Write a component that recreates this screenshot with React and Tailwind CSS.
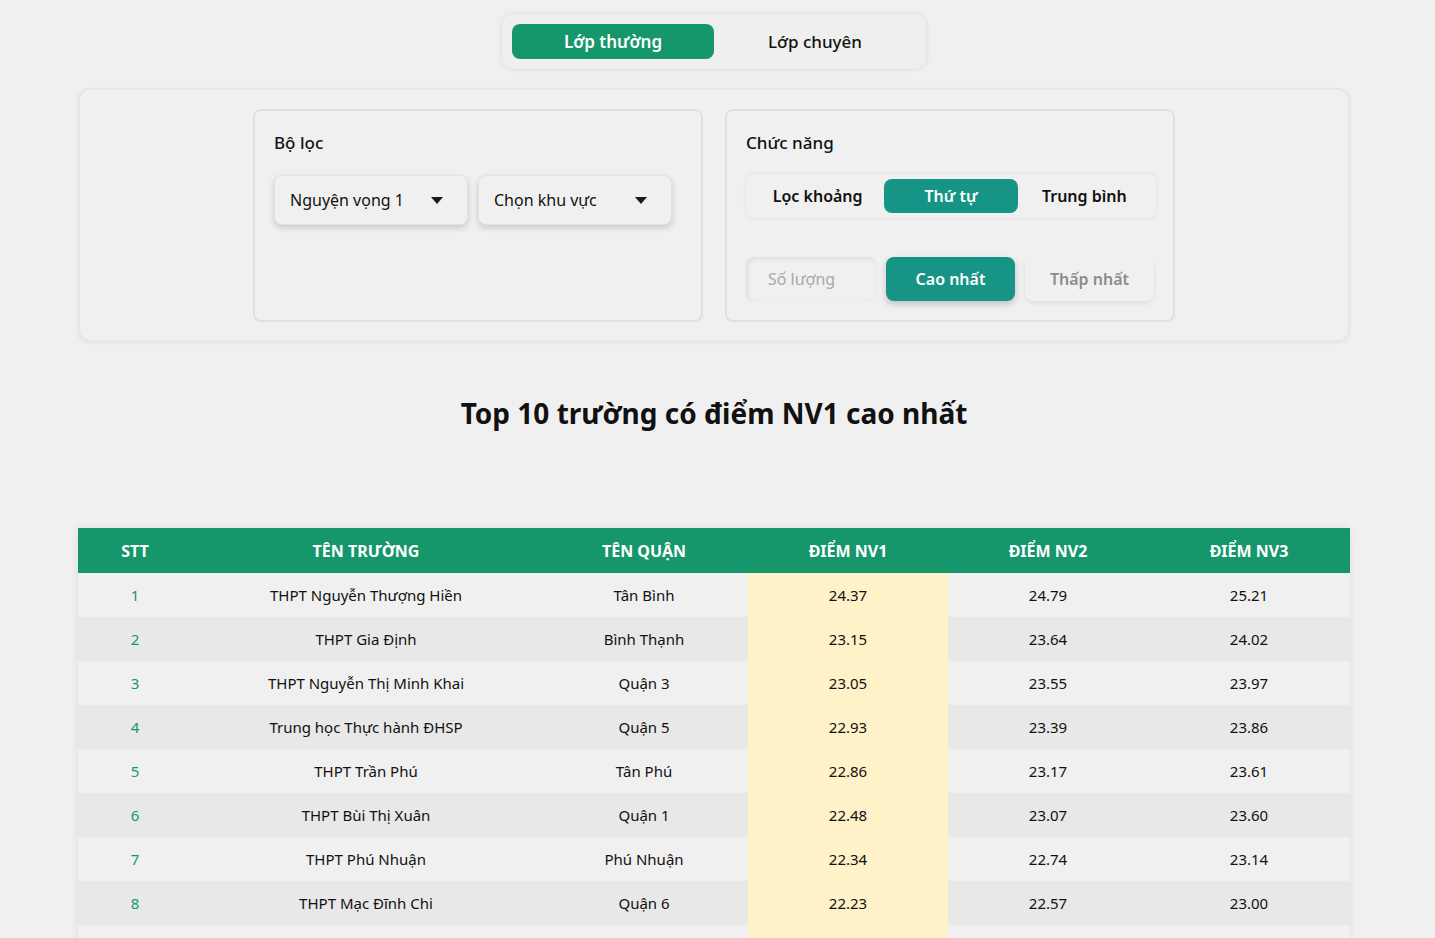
import React, { useState } from "react";

const schools = [
  { name: "THPT Nguyễn Thượng Hiền", district: "Tân Bình", nv1: 24.37, nv2: 24.79, nv3: 25.21 },
  { name: "THPT Gia Định", district: "Bình Thạnh", nv1: 23.15, nv2: 23.64, nv3: 24.02 },
  { name: "THPT Nguyễn Thị Minh Khai", district: "Quận 3", nv1: 23.05, nv2: 23.55, nv3: 23.97 },
  { name: "Trung học Thực hành ĐHSP", district: "Quận 5", nv1: 22.93, nv2: 23.39, nv3: 23.86 },
  { name: "THPT Trần Phú", district: "Tân Phú", nv1: 22.86, nv2: 23.17, nv3: 23.61 },
  { name: "THPT Bùi Thị Xuân", district: "Quận 1", nv1: 22.48, nv2: 23.07, nv3: 23.6 },
  { name: "THPT Phú Nhuận", district: "Phú Nhuận", nv1: 22.34, nv2: 22.74, nv3: 23.14 },
  { name: "THPT Mạc Đĩnh Chi", district: "Quận 6", nv1: 22.23, nv2: 22.57, nv3: 23.0 },
  { name: "THPT Nguyễn Hữu Huân", district: "Thủ Đức", nv1: 22.1, nv2: 22.45, nv3: 22.9 },
  { name: "THPT Lê Quý Đôn", district: "Quận 3", nv1: 21.95, nv2: 22.4, nv3: 22.85 },
];

const format = num => Number(num).toFixed(2);

function Caret() {
  return (
    <svg width="12" height="7" viewBox="0 0 12 7" className="shrink-0">
      <path d="M0 0 L12 0 L6 7 Z" fill="#1a1a1a" />
    </svg>
  );
}

function Dropdown({ label }) {
  return (
    <div className="w-[194px] h-[50px] rounded-lg border border-[#e2e2e2] bg-[#f0f0f0] shadow-[0_3px_6px_rgba(0,0,0,0.16)] flex items-center justify-between pl-[15px] pr-[24px] text-[16px] text-[#111]">
      <span>{label}</span>
      <Caret />
    </div>
  );
}

export default function App() {
  const [classType, setClassType] = useState("thuong");
  const [mode, setMode] = useState("thutu");
  const [order, setOrder] = useState("cao");

  return (
    <div className="min-h-screen bg-[#f0f0f0] font-['Noto_Sans',sans-serif] text-[#111] pb-10 pr-[7px]">
      {/* Class type tabs */}
      <div className="flex justify-center pt-[14px]">
        <div className="w-[424px] h-[55px] p-[10px] rounded-xl bg-[#efefef] shadow-[0_0_6px_rgba(0,0,0,0.09)] flex">
          <button
            onClick={() => setClassType("thuong")}
            className={`flex-1 rounded-lg text-[17px] font-semibold ${classType === "thuong" ? "bg-[#16976b] text-white" : "text-[#111]"}`}
          >
            Lớp thường
          </button>
          <button
            onClick={() => setClassType("chuyen")}
            className={`flex-1 rounded-lg text-[17px] font-medium ${classType === "chuyen" ? "bg-[#16976b] text-white" : "text-[#111]"}`}
          >
            Lớp chuyên
          </button>
        </div>
      </div>

      {/* Filter & functions */}
      <div className="mx-[78px] mt-[19px] rounded-xl border-2 border-[#e6e6e6] shadow-[0_1px_4px_rgba(0,0,0,0.06)] pt-[19px] pb-[18px] flex justify-center gap-[22px]">
        <div className="w-[450px] h-[213px] rounded-lg border-2 border-[#e0e0e0] px-[19px] pt-[20px]">
          <div className="text-[17px] font-medium leading-[24px]">Bộ lọc</div>
          <div className="flex gap-[10px] mt-[20px]">
            <Dropdown label="Nguyện vọng 1" />
            <Dropdown label="Chọn khu vực" />
          </div>
        </div>

        <div className="w-[450px] h-[213px] rounded-lg border-2 border-[#e0e0e0] px-[19px] pt-[20px]">
          <div className="text-[17px] font-medium leading-[24px]">Chức năng</div>
          <div className="mt-[19px] w-[410px] h-[44px] p-[5px] rounded-lg bg-[#f0f0f0] shadow-[0_0_5px_rgba(0,0,0,0.08)] flex">
            {[
              ["loc", "Lọc khoảng"],
              ["thutu", "Thứ tự"],
              ["tb", "Trung bình"],
            ].map(([key, label]) => (
              <button
                key={key}
                onClick={() => setMode(key)}
                className={`flex-1 rounded-lg text-[16px] font-semibold ${mode === key ? "bg-[#169486] text-white" : "text-[#111]"}`}
              >
                {label}
              </button>
            ))}
          </div>
          <div className="mt-[39px] flex gap-[10px]">
            <input
              placeholder="Số lượng"
              className="w-[130px] h-[44px] rounded-lg bg-[#f0f0f0] shadow-[inset_2px_2px_5px_rgba(0,0,0,0.08),0_0_3px_rgba(0,0,0,0.05)] px-[22px] text-[16px] outline-none placeholder:text-[#a8a8a8]"
            />
            <button
              onClick={() => setOrder("cao")}
              className={`w-[130px] h-[44px] rounded-lg text-[16px] font-semibold ${order === "cao" ? "bg-[#169486] text-white shadow-[0_3px_6px_rgba(0,0,0,0.2)]" : "text-[#8c8c8c] shadow-[0_2px_5px_rgba(0,0,0,0.08)]"}`}
            >
              Cao nhất
            </button>
            <button
              onClick={() => setOrder("thap")}
              className={`w-[130px] h-[44px] rounded-lg text-[16px] font-semibold ${order === "thap" ? "bg-[#169486] text-white shadow-[0_3px_6px_rgba(0,0,0,0.2)]" : "text-[#8c8c8c] shadow-[0_2px_5px_rgba(0,0,0,0.08)]"}`}
            >
              Thấp nhất
            </button>
          </div>
        </div>
      </div>

      {/* Title */}
      <h1 className="mt-[52px] text-center text-[28px] font-bold leading-[38px] text-[#111]">
        Top 10 trường có điểm NV1 cao nhất
      </h1>

      {/* Table */}
      <div className="mx-[78px] mt-[96px] shadow-[0_0_8px_rgba(0,0,0,0.08)]">
        <table className="w-full border-collapse table-fixed text-[15px]">
          <colgroup>
            <col className="w-[114px]" />
            <col className="w-[348px]" />
            <col className="w-[208px]" />
            <col className="w-[200px]" />
            <col className="w-[200px]" />
            <col />
          </colgroup>
          <thead>
            <tr className="bg-[#15976b] text-white h-[45px] text-[16px]">
              <th className="font-bold uppercase">STT</th>
              <th className="font-bold uppercase">Tên trường</th>
              <th className="font-bold uppercase">Tên quận</th>
              <th className="font-bold uppercase">Điểm NV1</th>
              <th className="font-bold uppercase">Điểm NV2</th>
              <th className="font-bold uppercase">Điểm NV3</th>
            </tr>
          </thead>
          <tbody>
            {schools.map((s, i) => (
              <tr key={s.name} className={`h-[44px] text-center ${i % 2 === 0 ? "bg-[#f0f0f0]" : "bg-[#e8e8e8]"}`}>
                <td className="text-[#16976b]">{i + 1}</td>
                <td>{s.name}</td>
                <td>{s.district}</td>
                <td className="bg-[#fff2c9]">{format(s.nv1)}</td>
                <td>{format(s.nv2)}</td>
                <td>{format(s.nv3)}</td>
              </tr>
            ))}
          </tbody>
        </table>
      </div>
    </div>
  );
}
